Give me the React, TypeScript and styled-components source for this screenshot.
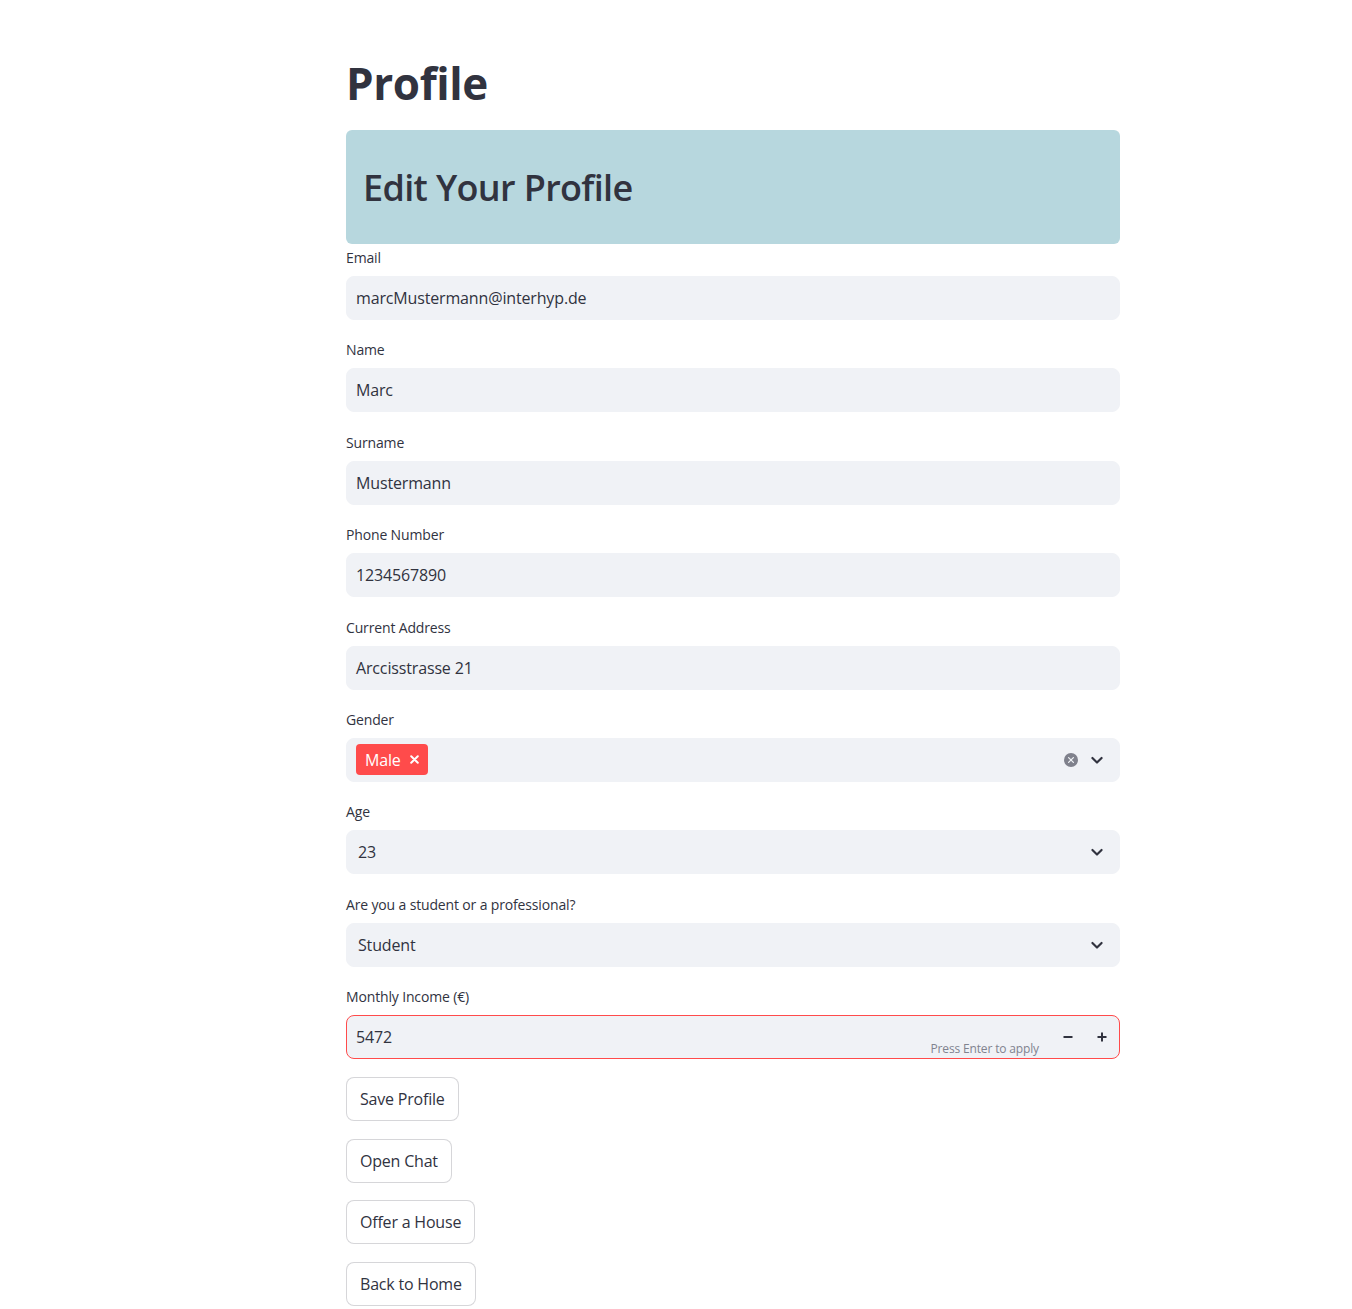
import React from 'react';
import styled, { createGlobalStyle } from 'styled-components';

const GlobalStyle = createGlobalStyle`
    body {
        margin: 0;
        background: #ffffff;
        color: #31333f;
        font-family: "Open Sans", "Liberation Sans", sans-serif;
    }
`;

const StyledPage = styled.div`
    width: 774px;
    margin-left: 346px;
    padding-top: 57px;
    padding-bottom: 40px;
`;

const StyledTitle = styled.h1`
    margin: 0 0 20px 0;
    font-size: 44px;
    line-height: 53px;
    font-weight: 700;
    letter-spacing: -0.4px;
    color: #31333f;
`;

const StyledBanner = styled.div`
    height: 114px;
    background: #b7d7de;
    border-radius: 6px;
    padding: 0 17px;
    display: flex;
    align-items: center;
    box-sizing: border-box;
`;

const StyledBannerTitle = styled.h2`
    margin: 0;
    font-size: 36px;
    font-weight: 600;
    letter-spacing: -0.65px;
    color: #31333f;
`;

const StyledForm = styled.div`
    margin-top: 3px;
    display: flex;
    flex-direction: column;
    gap: 19.4px;
`;

const StyledField = styled.div`
    display: flex;
    flex-direction: column;
`;

const StyledLabel = styled.label`
    font-size: 14px;
    line-height: 21px;
    margin-bottom: 8px;
    letter-spacing: -0.15px;
`;

const StyledBox = styled.div<{ $error?: boolean; $pad?: number }>`
    height: 44px;
    box-sizing: border-box;
    background: #f0f2f6;
    border-radius: 8px;
    border: 1px solid ${(p) => (p.$error ? '#ff4b4b' : '#f0f2f6')};
    display: flex;
    align-items: center;
    padding-left: ${(p) => (p.$pad ?? 9)}px;
    font-size: 16px;
    letter-spacing: -0.15px;
    color: #31333f;
`;

const StyledValue = styled.span`
    flex: 1;
`;

const StyledTag = styled.span`
    display: inline-flex;
    align-items: center;
    height: 31px;
    padding: 0 8px 0 9px;
    gap: 8px;
    background: #ff4b4b;
    color: #ffffff;
    border-radius: 4px;
    font-size: 16px;
`;

const StyledIcons = styled.div`
    display: flex;
    align-items: center;
    gap: 9px;
    padding-right: 12px;
`;

const StyledClear = styled.span`
    width: 14px;
    height: 14px;
    border-radius: 50%;
    background: #7f818c;
    display: flex;
    align-items: center;
    justify-content: center;
`;

const StyledHint = styled.span`
    align-self: flex-end;
    padding-bottom: 0;
    margin-right: 12px;
    font-size: 12px;
    line-height: 18px;
    color: #80838f;
`;

const StyledStep = styled.span`
    width: 34px;
    height: 100%;
    display: flex;
    align-items: center;
    justify-content: center;
`;

const StyledButtons = styled.div`
    margin-top: 18px;
    display: flex;
    flex-direction: column;
    align-items: flex-start;
    gap: 17.5px;
`;

const StyledButton = styled.button`
    height: 44px;
    padding: 0 13px;
    background: #ffffff;
    border: 1px solid rgba(49, 51, 63, 0.2);
    border-radius: 8px;
    font-family: inherit;
    font-size: 16px;
    letter-spacing: -0.2px;
    color: #31333f;
    cursor: pointer;
`;

const Chevron = () => (
    <svg width="20" height="20" viewBox="0 0 24 24" fill="none">
        <path d="M6.5 9.5l5.5 5.5 5.5-5.5" stroke="#31333f" strokeWidth="2.6" strokeLinecap="round" strokeLinejoin="round" />
    </svg>
);

const Cross = ({ size, color, width }: { size: number; color: string; width: number }) => (
    <svg width={size} height={size} viewBox="0 0 10 10" fill="none">
        <path d="M2 2l6 6M8 2l-6 6" stroke={color} strokeWidth={width} strokeLinecap="round" />
    </svg>
);

const fields = [
    { label: 'Email', value: 'marcMustermann@interhyp.de' },
    { label: 'Name', value: 'Marc' },
    { label: 'Surname', value: 'Mustermann' },
    { label: 'Phone Number', value: '1234567890' },
    { label: 'Current Address', value: 'Arccisstrasse 21' },
];

const buttons = ['Save Profile', 'Open Chat', 'Offer a House', 'Back to Home'];

const App = () => {
    return (
        <React.Fragment>
            <GlobalStyle />
            <StyledPage>
                <StyledTitle>Profile</StyledTitle>
                <StyledBanner>
                    <StyledBannerTitle>Edit Your Profile</StyledBannerTitle>
                </StyledBanner>
                <StyledForm>
                    {fields.map((each, i) =>
                        <StyledField key={i}>
                            <StyledLabel>{each.label}</StyledLabel>
                            <StyledBox>{each.value}</StyledBox>
                        </StyledField>
                    )}
                    <StyledField>
                        <StyledLabel>Gender</StyledLabel>
                        <StyledBox>
                            <StyledValue>
                                <StyledTag>Male <Cross size={11} color="#ffffff" width={1.8} /></StyledTag>
                            </StyledValue>
                            <StyledIcons>
                                <StyledClear><Cross size={8} color="#f0f2f6" width={1.6} /></StyledClear>
                                <Chevron />
                            </StyledIcons>
                        </StyledBox>
                    </StyledField>
                    <StyledField>
                        <StyledLabel>Age</StyledLabel>
                        <StyledBox $pad={11}>
                            <StyledValue>23</StyledValue>
                            <StyledIcons><Chevron /></StyledIcons>
                        </StyledBox>
                    </StyledField>
                    <StyledField>
                        <StyledLabel>Are you a student or a professional?</StyledLabel>
                        <StyledBox $pad={11}>
                            <StyledValue>Student</StyledValue>
                            <StyledIcons><Chevron /></StyledIcons>
                        </StyledBox>
                    </StyledField>
                    <StyledField>
                        <StyledLabel>Monthly Income (€)</StyledLabel>
                        <StyledBox $error>
                            <StyledValue>5472</StyledValue>
                            <StyledHint>Press Enter to apply</StyledHint>
                            <StyledStep>
                                <svg width="12" height="12" viewBox="0 0 12 12"><path d="M1.5 6h9" stroke="#31333f" strokeWidth="2" /></svg>
                            </StyledStep>
                            <StyledStep>
                                <svg width="12" height="12" viewBox="0 0 12 12"><path d="M1.5 6h9M6 1.5v9" stroke="#31333f" strokeWidth="2" /></svg>
                            </StyledStep>
                        </StyledBox>
                    </StyledField>
                </StyledForm>
                <StyledButtons>
                    {buttons.map((each, i) => <StyledButton key={i}>{each}</StyledButton>)}
                </StyledButtons>
            </StyledPage>
        </React.Fragment>
    );
}

export default App;
